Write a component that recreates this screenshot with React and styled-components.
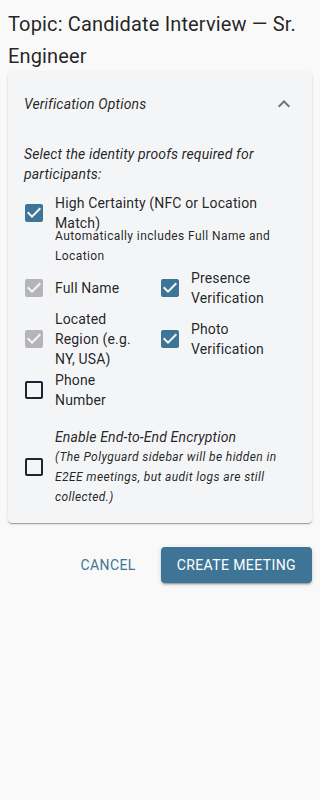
import React from 'react';
import styled, { createGlobalStyle } from 'styled-components';

const GlobalStyle = createGlobalStyle`
  body {
    margin: 0;
    background: #f9f9f9;
    font-family: Roboto, "Liberation Sans", sans-serif;
    color: rgba(0, 0, 0, 0.87);
  }
`;

const Page = styled.div`
  padding: 8px;
`;

const Title = styled.h2`
  margin: 0;
  font-size: 20px;
  font-weight: 400;
  line-height: 32px;
  letter-spacing: 0.15px;
`;

const Card = styled.div`
  background: #f4f5f7;
  border-radius: 4px;
  box-shadow: 0 2px 1px -1px rgba(0, 0, 0, 0.2), 0 1px 1px 0 rgba(0, 0, 0, 0.14),
    0 1px 3px 0 rgba(0, 0, 0, 0.12);
`;

const CardHeader = styled.div`
  display: flex;
  align-items: center;
  justify-content: space-between;
  height: 64px;
  padding: 0 16px;
`;

const HeaderText = styled.span`
  font-size: 14px;
  font-style: italic;
  letter-spacing: 0.15px;
  line-height: 20px;
`;

const CardBody = styled.div`
  padding: 8px 16px 16px;
`;

const Intro = styled.p`
  margin: 0 0 8px;
  font-size: 14px;
  font-style: italic;
  line-height: 20px;
  letter-spacing: 0.15px;
`;

const Option = styled.label`
  display: flex;
  align-items: center;
  margin-left: -11px;
  margin-right: 16px;
  min-height: 42px;
`;

const BoxWrap = styled.span`
  display: inline-flex;
  padding: 9px;
  flex-shrink: 0;
  color: ${p => (p.$disabled ? 'rgba(0, 0, 0, 0.26)' : p.$checked ? '#3e7596' : '#1c2533')};
`;

const LabelText = styled.span`
  font-size: 14px;
  line-height: 20px;
  letter-spacing: 0.15px;
  font-style: ${p => (p.$italic ? 'italic' : 'normal')};
`;

const Helper = styled.div`
  font-size: 12px;
  line-height: 20px;
  letter-spacing: 0.4px;
  margin: -8px 0 0 31px;
  color: rgba(0, 0, 0, 0.87);
`;

const Grid = styled.div`
  display: grid;
  grid-template-columns: 1fr 1fr;
  margin-top: 1px;
`;

const EncryptionRow = styled.div`
  margin-top: 16px;
`;

const Note = styled.span`
  display: block;
  font-size: 12px;
  line-height: 20px;
  letter-spacing: 0.4px;
  font-style: italic;
`;

const Actions = styled.div`
  display: flex;
  justify-content: flex-end;
  align-items: center;
  gap: 17px;
  margin-top: 24px;
`;

const TextButton = styled.button`
  border: 0;
  background: none;
  padding: 6px 8px;
  font-family: Roboto, "Liberation Sans", sans-serif;
  font-size: 14px;
  font-weight: 400;
  letter-spacing: 0.4px;
  line-height: 24px;
  color: #3e7596;
  text-transform: uppercase;
`;

const ContainedButton = styled(TextButton)`
  background: #3e7596;
  color: #ffffff;
  padding: 6px 16px;
  border-radius: 4px;
  box-shadow: 0 3px 1px -2px rgba(0, 0, 0, 0.2), 0 2px 2px 0 rgba(0, 0, 0, 0.14),
    0 1px 5px 0 rgba(0, 0, 0, 0.12);
`;

const CheckIcon = ({ checked }) => (
  <svg width="24" height="24" viewBox="0 0 24 24" fill="currentColor">
    {checked ? (
      <path d="M19 3H5c-1.11 0-2 .9-2 2v14c0 1.1.89 2 2 2h14c1.11 0 2-.9 2-2V5c0-1.1-.89-2-2-2zm-9 14l-5-5 1.41-1.41L10 14.17l7.59-7.59L19 8l-9 9z" />
    ) : (
      <path d="M19 5v14H5V5h14m0-2H5c-1.1 0-2 .9-2 2v14c0 1.1.9 2 2 2h14c1.1 0 2-.9 2-2V5c0-1.1-.9-2-2-2z" />
    )}
  </svg>
);

const Check = ({ checked, disabled, children }) => (
  <Option>
    <BoxWrap $checked={checked} $disabled={disabled}>
      <CheckIcon checked={checked} />
    </BoxWrap>
    {children}
  </Option>
);

const proofs = [
  { label: 'Full Name', checked: true, disabled: true },
  { label: 'Presence Verification', checked: true },
  { label: 'Located Region (e.g. NY, USA)', checked: true, disabled: true },
  { label: 'Photo Verification', checked: true },
  { label: 'Phone Number', checked: false },
];

export default function App() {
  return (
    <Page>
      <GlobalStyle />
      <Title>Topic: Candidate Interview — Sr. Engineer</Title>
      <Card>
        <CardHeader>
          <HeaderText>Verification Options</HeaderText>
          <svg width="24" height="24" viewBox="0 0 24 24" fill="rgba(0,0,0,0.54)">
            <path d="M12 8l-6 6 1.41 1.41L12 10.83l4.59 4.58L18 14z" />
          </svg>
        </CardHeader>
        <CardBody>
          <Intro>Select the identity proofs required for participants:</Intro>
          <Check checked>
            <LabelText>High Certainty (NFC or Location Match)</LabelText>
          </Check>
          <Helper>Automatically includes Full Name and Location</Helper>
          <Grid>
            {proofs.map(p => (
              <Check key={p.label} checked={p.checked} disabled={p.disabled}>
                <LabelText>{p.label}</LabelText>
              </Check>
            ))}
          </Grid>
          <EncryptionRow>
            <Check checked={false}>
              <LabelText $italic>
                Enable End-to-End Encryption
                <Note>
                  (The Polyguard sidebar will be hidden in E2EE meetings, but audit logs are still
                  collected.)
                </Note>
              </LabelText>
            </Check>
          </EncryptionRow>
        </CardBody>
      </Card>
      <Actions>
        <TextButton>Cancel</TextButton>
        <ContainedButton>Create Meeting</ContainedButton>
      </Actions>
    </Page>
  );
}
